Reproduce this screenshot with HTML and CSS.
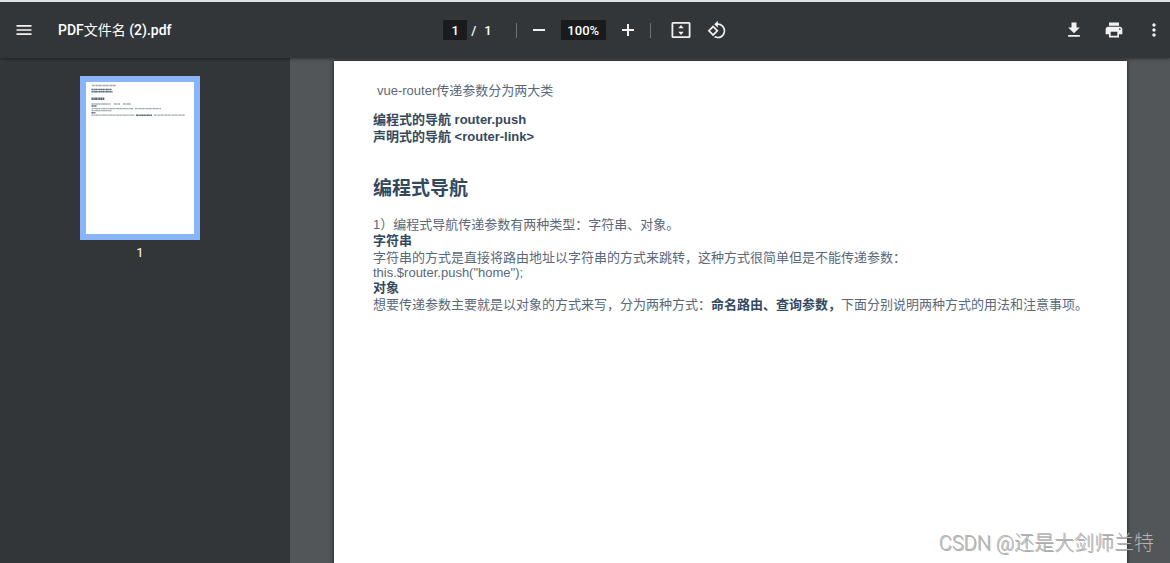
FILE: index.html
```html
<!DOCTYPE html>
<html lang="zh-CN">
<head>
<meta charset="utf-8">
<title>PDF文件名 (2).pdf</title>
<link rel="stylesheet" href="styles.css">
</head>
<body>
<div class="viewer">
  <header class="toolbar">
    <div class="start">
      <button class="icon-button" type="button" aria-label="菜单"><svg viewBox="0 0 24 24"><path d="M3 18h18v-2H3v2zm0-5h18v-2H3v2zm0-7v2h18V6H3z"/></svg></button>
      <h1 class="title">PDF<span class="title-cjk">文件名</span> (2).pdf</h1>
    </div>
    <div class="center">
      <input class="field page-field" type="text" value="1" aria-label="页码">
      <span class="slash">/</span>
      <span class="total">1</span>
      <span class="divider"></span>
      <button class="icon-button zoom-out" type="button" aria-label="缩小"><svg viewBox="0 0 20 20"><path d="M4 9h12v2H4z"/></svg></button>
      <input class="field zoom-field" type="text" value="100%" aria-label="缩放级别">
      <button class="icon-button zoom-in" type="button" aria-label="放大"><svg viewBox="0 0 20 20"><path d="M9 4h2v5h5v2h-5v5H9v-5H4V9h5z"/></svg></button>
      <span class="divider"></span>
      <button class="icon-button fit" type="button" aria-label="适合页面大小"><svg viewBox="0 0 20 20"><path d="M2 2h16q1.500 0 1.500 1.500v13q0 1.500-1.500 1.500H2Q.5 18 .5 16.500v-13Q.5 2 2 2zm.3 1.800v12.400h15.400V3.800zM10 5l2.700 3.200H7.300zm0 10l-2.700-3.200h5.400z" fill-rule="evenodd"/></svg></button>
      <button class="icon-button" type="button" aria-label="逆时针旋转"><svg viewBox="0 0 24 24"><path d="M7.340 6.410L.86 12.900l6.490 6.480 6.490-6.480-6.500-6.490zM3.690 12.900l3.660-3.660L11 12.900l-3.660 3.660-3.650-3.660zm15.670-6.260A8.950 8.950 0 0 0 13 4V.76L8.760 5 13 9.240V6c1.790 0 3.580.68 4.950 2.050a7.007 7.007 0 0 1 0 9.900 6.973 6.973 0 0 1-7.920 1.360l-1.490 1.490A8.983 8.983 0 0 0 13 22c2.300 0 4.610-.88 6.360-2.640a8.980 8.980 0 0 0 0-12.720z"/></svg></button>
    </div>
    <div class="end">
      <button class="icon-button" type="button" aria-label="下载"><svg viewBox="0 0 24 24"><path d="M19 9h-4V3H9v6H5l7 7 7-7zM5 18v2h14v-2H5z"/></svg></button>
      <button class="icon-button" type="button" aria-label="打印"><svg viewBox="0 0 24 24"><path d="M19 8H5c-1.660 0-3 1.340-3 3v6h4v4h12v-4h4v-6c0-1.660-1.340-3-3-3zm-3 11H8v-5h8v5zm3-7c-.55 0-1-.45-1-1s.45-1 1-1 1 .45 1 1-.45 1-1 1zm-1-9H6v4h12V3z"/></svg></button>
      <button class="icon-button" type="button" aria-label="更多操作"><svg viewBox="0 0 24 24"><path d="M12 8c1.100 0 2-.9 2-2s-.9-2-2-2-2 .9-2 2 .9 2 2 2zm0 2c-1.100 0-2 .9-2 2s.9 2 2 2 2-.9 2-2-.9-2-2-2zm0 6c-1.100 0-2 .9-2 2s.9 2 2 2 2-.9 2-2-.9-2-2-2z"/></svg></button>
    </div>
  </header>
  <div class="content">
    <aside class="sidebar">
      <button class="thumbnail" type="button" aria-label="第 1 页">
        <svg viewBox="0 0 108 152" fill="none" stroke="#6d7a88">
          <g stroke-dasharray="2 .3 1 .4 3 .3" stroke-width="1.300" opacity=".65">
            <path d="M6 3.500h24M5.500 22h19M28 22h6M37 22h8M5.500 26.700h42M49 26.700h26M5.500 28.700h20M5.500 33.200h43M68 33.200h31"/>
          </g>
          <g stroke="#3f4d5c" stroke-dasharray="2 .3 1 .3" stroke-width="1.500" opacity=".85">
            <path d="M5.500 7.500h20M5.500 9.700h21M5.500 24h5M5.500 30.700h4M50 33.200h16"/>
            <path d="M5.500 16.700h13" stroke-width="2.600"/>
          </g>
        </svg>
      </button>
      <span class="thumbnail-label">1</span>
    </aside>
    <main class="stage">
      <article class="page">
        <p class="lead">vue-router传递参数分为两大类</p>
        <p class="kinds"><strong>编程式的导航 router.push<br>声明式的导航 &lt;router-link&gt;</strong></p>
        <h2>编程式导航</h2>
        <p>1）编程式导航传递参数有两种类型：字符串、对象。</p>
        <h3>字符串</h3>
        <p>字符串的方式是直接将路由地址以字符串的方式来跳转，这种方式很简单但是不能传递参数：</p>
        <p class="code">this.$router.push("home");</p>
        <h3>对象</h3>
        <p>想要传递参数主要就是以对象的方式来写，分为两种方式：<strong>命名路由、查询参数，</strong>下面分别说明两种方式的用法和注意事项。</p>
      </article>
    </main>
  </div>
  <div class="watermark">CSDN @还是大剑师兰特</div>
</div>
</body>
</html>
```
FILE: styles.css
```css
* { box-sizing: border-box; }

body {
  margin: 0;
  background: #525659;
  font-family: Roboto, "Noto Sans CJK SC", sans-serif;
}

.viewer {
  position: relative;
  display: flex;
  flex-direction: column;
  height: 100vh;
  overflow: hidden;
  border-top: 2px solid #dfe1e5;
}

.toolbar {
  position: relative;
  z-index: 1;
  display: grid;
  grid-template-columns: 1fr auto 1fr;
  align-items: center;
  flex: none;
  height: 56px;
  background: #323639;
  color: #fff;
  font-size: 13px;
  font-weight: 500;
  box-shadow: 0 1px 3px rgba(0, 0, 0, .4);
}

.start, .center, .end { display: flex; align-items: center; }
.start { padding-left: 8px; gap: 18px; }
.center { padding-left: 6px; }
.end { justify-content: flex-end; gap: 8px; }

.title {
  margin: 0;
  font-size: 14px;
  font-weight: 500;
  line-height: 20px;
}

.title-cjk { font-weight: 400; }

.icon-button {
  display: flex;
  align-items: center;
  justify-content: center;
  width: 32px;
  height: 32px;
  padding: 0;
  border: 0;
  background: none;
}

.icon-button svg { width: 20px; height: 20px; fill: #f1f1f1; }

.field {
  height: 20px;
  padding: 0;
  border: 0;
  background: #191b1c;
  color: #fff;
  font: inherit;
  text-align: center;
}

.page-field { width: 24px; }
.zoom-field { width: 45px; margin: 0 6px; }
.slash { margin: 0 8px 0 4px; }
.divider { width: 1px; height: 15px; background: #6f7275; }
.total + .divider { margin: 0 6px 0 24px; }
.zoom-in + .divider { margin: 0 14px 0 6px; }
.fit { margin-right: 4px; }

.content { display: flex; flex: 1; min-height: 0; }

.sidebar {
  display: flex;
  flex-direction: column;
  align-items: center;
  flex: none;
  width: 290px;
  padding: 18px 10px 0 0;
  background: #323639;
}

.thumbnail {
  width: 120px;
  height: 164px;
  padding: 0;
  border: 6px solid #8ab4f8;
  background: #fff;
}

.thumbnail svg { display: block; }

.thumbnail-label {
  margin-top: 4px;
  color: #fff;
  font-size: 13px;
  font-weight: 400;
  line-height: 18px;
}

.stage {
  display: flex;
  align-items: flex-start;
  justify-content: center;
  flex: 1;
  min-width: 0;
  padding: 3px 43px 0 44px;
}

.page {
  width: 100%;
  max-width: 794px;
  min-height: 100vh;
  padding: 21px 36px 40px 39px;
  background: #fff;
  box-shadow: 0 0 4px rgba(0, 0, 0, .7);
  color: #5a6878;
  font: 13px/16px "Liberation Sans", "Noto Sans CJK SC", sans-serif;
}

.page p { margin: 0; line-height: 17px; }
.page strong, .page h2, .page h3 { color: #34495e; font-weight: 700; }
.page .lead { padding-left: 4px; }
.page .kinds { margin-top: 12px; }
.page h2 { margin: 32px 0 15px; font-size: 19px; line-height: 24px; }
.page h3 { margin: 0; font-size: 13px; line-height: 16px; }
.page .code { line-height: 14px; }

.watermark {
  position: absolute;
  z-index: 2;
  right: 16px;
  bottom: 8px;
  color: #b4b4b4;
  font: 300 20px/24px Roboto, "Noto Sans CJK SC", sans-serif;
  text-shadow: 1px 1px 0 rgba(90, 90, 90, .5);
}
```
